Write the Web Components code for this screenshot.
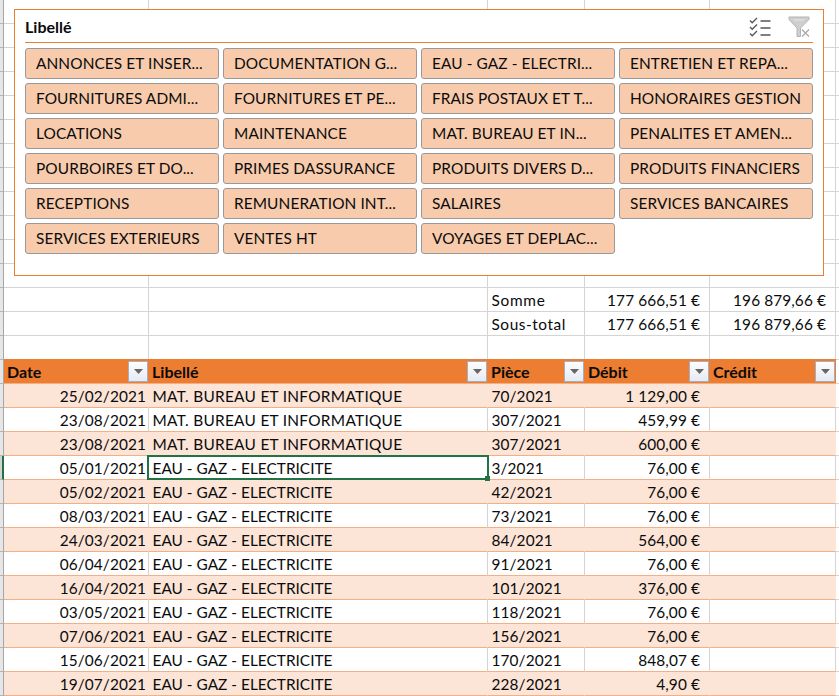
<!DOCTYPE html>
<html lang="fr"><head><meta charset="utf-8"><title>Libellé</title>
<style>
html,body{margin:0;padding:0;background:#fff;overflow:hidden}
body{font-family:"Lato","Liberation Sans",sans-serif;font-size:15.4px;letter-spacing:.1px;color:#0b0b0b;width:839px;height:696px}
</style></head><body>
<x-sheet id="sheet"></x-sheet>
<script>
const make=(name,css,html)=>{
  class C extends HTMLElement{
    constructor(){super();this.attachShadow({mode:'open'}).innerHTML=`<style>${css}</style>${html}`;}
  }
  customElements.define(name,C);
};
make('x-sheet',`:host{display:block;position:relative;width:839px;height:696px;overflow:hidden}
 ::slotted(x-slicer){position:absolute;left:14px;top:9px}`,`<slot></slot>`);
make('x-row',`:host{display:grid;grid-template-columns:4px 145px 339px 97px 125px 126px 3px;height:24px;--bg:transparent;--line:#d4d4d4;--vline:#d4d4d4}
 :host([kind=stripe]){--bg:#fce4d6;--line:#f4b084;--vline:transparent}
 :host([kind=plain]){--line:#f4b084}
 .strip{background:#e6e6e6;border-right:1px solid #a6a6a6;border-bottom:1px solid #b4b4b4;box-sizing:border-box}
 :host([active]) .strip{background:#d2d2d2;border-right:2px solid #217346}
 .rest{border-bottom:1px solid #d4d4d4;box-sizing:border-box}`,
 `<div class="strip"></div><slot></slot><div class="rest"></div>`);
make('x-cell',`:host{display:flex;align-items:center;box-sizing:border-box;position:relative;min-width:0;white-space:nowrap;
  background:var(--bg);border-bottom:1px solid var(--line);border-right:1px solid var(--vline);padding:0 4px 0 3.5px}
 :host([num]){justify-content:flex-end;padding-right:9px}
 :host([date]){justify-content:flex-end;padding-right:2px}
 :host([selected]) .sel{display:block}
 .sel{display:none;position:absolute;left:-2px;top:-1px;right:-2px;bottom:-1px;border:2px solid #217346;z-index:2;pointer-events:none}
 .sel i{position:absolute;right:-3px;bottom:-3px;width:5px;height:5px;background:#217346}
 `,`<slot></slot><div class="sel"><i></i></div>`);
make('x-head-cell',`:host{display:flex;align-items:center;justify-content:space-between;box-sizing:border-box;background:#ed7d31;background-clip:padding-box;border-bottom:1px solid #f4b084;padding:0 1px 0 3px;box-shadow:0 -1px 0 #ed7d31;font-weight:700;font-size:16px;letter-spacing:0;color:#0b0b0b;position:relative}
 button{all:unset;box-sizing:border-box;width:20px;height:21px;border:1px solid #a4b0c2;background:linear-gradient(#fdfdfe,#e6eaf2);display:flex;align-items:center;justify-content:center}
 svg{display:block}`,
 `<span><slot></slot></span><button aria-label="Filtre"><svg width="9" height="5" viewBox="0 0 9 5"><path d="M0 0H9L4.5 5Z" fill="#666"/></svg></button>`);
make('x-slicer',`:host{display:block;box-sizing:border-box;width:810px;height:267px;background:#fff;border:1px solid #ed7d31;padding:0 10px}
 header{display:flex;align-items:center;justify-content:space-between;height:33px;border-bottom:1px solid #ed7d31;box-sizing:border-box;font-weight:700;font-size:16px;letter-spacing:0;margin-bottom:5px;padding-top:1px}
 .tools{display:flex;gap:17px;align-items:center;margin-right:3px}
 svg{display:block}
 .grid{display:grid;grid-template-columns:repeat(4,194px);grid-auto-rows:31px;gap:4px}`,
 `<header><span><slot name="title"></slot></span><div class="tools">
  <svg width="22" height="20" viewBox="0 0 22 20" fill="none" stroke="#555" aria-hidden="true">
    <path d="M1 3.5 3.2 5.8 8 1M1 10 3.2 12.3 8 7.5M1 16.5 3.2 18.8 8 14" stroke-width="1.3"/>
    <path d="M11.5 4H21.5M11.5 11H21.5M11.5 18H21.5" stroke-width="1.6"/>
  </svg>
  <svg width="22" height="21" viewBox="0 0 22 21" aria-hidden="true">
    <path d="M1 1H21V3.5L12.5 12V20.5H9V12L1 3.5Z" fill="#cfcfcf" stroke="#b4b4b4" stroke-width="1"/>
    <path d="M6 4H16" stroke="#e8e8e8"/>
    <path d="M14 13.5 21 20.5M21 13.5 14 20.5" stroke="#aaa" stroke-width="1.4"/>
  </svg></div></header><div class="grid"><slot></slot></div>`);
make('x-slicer-button',`:host{display:flex;align-items:center;box-sizing:border-box;height:31px;background:#f8cbad;border:1px solid #999;border-radius:3px;padding:0 0 1px 10px;white-space:nowrap;overflow:hidden}`,`<slot></slot>`);

const sheet=document.getElementById('sheet');
const el=(t,attrs={},txt)=>{const e=document.createElement(t);for(const k in attrs)e.setAttribute(k,attrs[k]);if(txt!=null)e.textContent=txt;return e;};
const row=(kind,cells,active)=>{const r=el('x-row',kind?{kind}:{});if(active)r.setAttribute('active','');cells.forEach(c=>r.append(c));sheet.append(r);};
const blank=()=>[0,1,2,3,4].map(()=>el('x-cell'));
for(let i=0;i<12;i++)row(null,blank());
row(null,[el('x-cell'),el('x-cell'),el('x-cell',{style:'letter-spacing:.7px'},'Somme'),el('x-cell',{num:''},'177 666,51 €'),el('x-cell',{num:''},'196 879,66 €')]);
row(null,[el('x-cell'),el('x-cell'),el('x-cell',{style:'letter-spacing:.55px'},'Sous-total'),el('x-cell',{num:''},'177 666,51 €'),el('x-cell',{num:''},'196 879,66 €')]);
row(null,blank());
row('head',['Date','Libellé','Pièce','Débit','Crédit'].map(t=>el('x-head-cell',{},t)));
const M='MAT. BUREAU ET INFORMATIQUE',E='EAU - GAZ - ELECTRICITE';
[['25/02/2021',M,'70/2021','1 129,00 €'],['23/08/2021',M,'307/2021','459,99 €'],['23/08/2021',M,'307/2021','600,00 €'],
 ['05/01/2021',E,'3/2021','76,00 €'],['05/02/2021',E,'42/2021','76,00 €'],['08/03/2021',E,'73/2021','76,00 €'],
 ['24/03/2021',E,'84/2021','564,00 €'],['06/04/2021',E,'91/2021','76,00 €'],['16/04/2021',E,'101/2021','376,00 €'],
 ['03/05/2021',E,'118/2021','76,00 €'],['07/06/2021',E,'156/2021','76,00 €'],['15/06/2021',E,'170/2021','848,07 €'],
 ['19/07/2021',E,'228/2021','4,90 €']].forEach((d,i)=>{
  const a={style:d[1]===M?'letter-spacing:.29px':'letter-spacing:.01px'};
  if(i===3)a.selected='';
  const lib=el('x-cell',a,d[1]);
  row(i%2?'plain':'stripe',[el('x-cell',{date:''},d[0]),lib,el('x-cell',{},d[2]),el('x-cell',{num:''},d[3]),el('x-cell')],i===3);
});
const s=el('x-slicer');
s.append(el('span',{slot:'title'},'Libellé'));
['ANNONCES ET INSER...','DOCUMENTATION G...','EAU - GAZ - ELECTRI...','ENTRETIEN ET REPA...','FOURNITURES ADMI...','FOURNITURES ET PE...','FRAIS POSTAUX ET T...','HONORAIRES GESTION','LOCATIONS','MAINTENANCE','MAT. BUREAU ET IN...','PENALITES ET AMEN...','POURBOIRES ET DO...','PRIMES DASSURANCE','PRODUITS DIVERS D...','PRODUITS FINANCIERS','RECEPTIONS','REMUNERATION INT...','SALAIRES','SERVICES BANCAIRES','SERVICES EXTERIEURS','VENTES HT','VOYAGES ET DEPLAC...'].forEach(t=>s.append(el('x-slicer-button',{},t)));
sheet.append(s);
</script></body></html>
